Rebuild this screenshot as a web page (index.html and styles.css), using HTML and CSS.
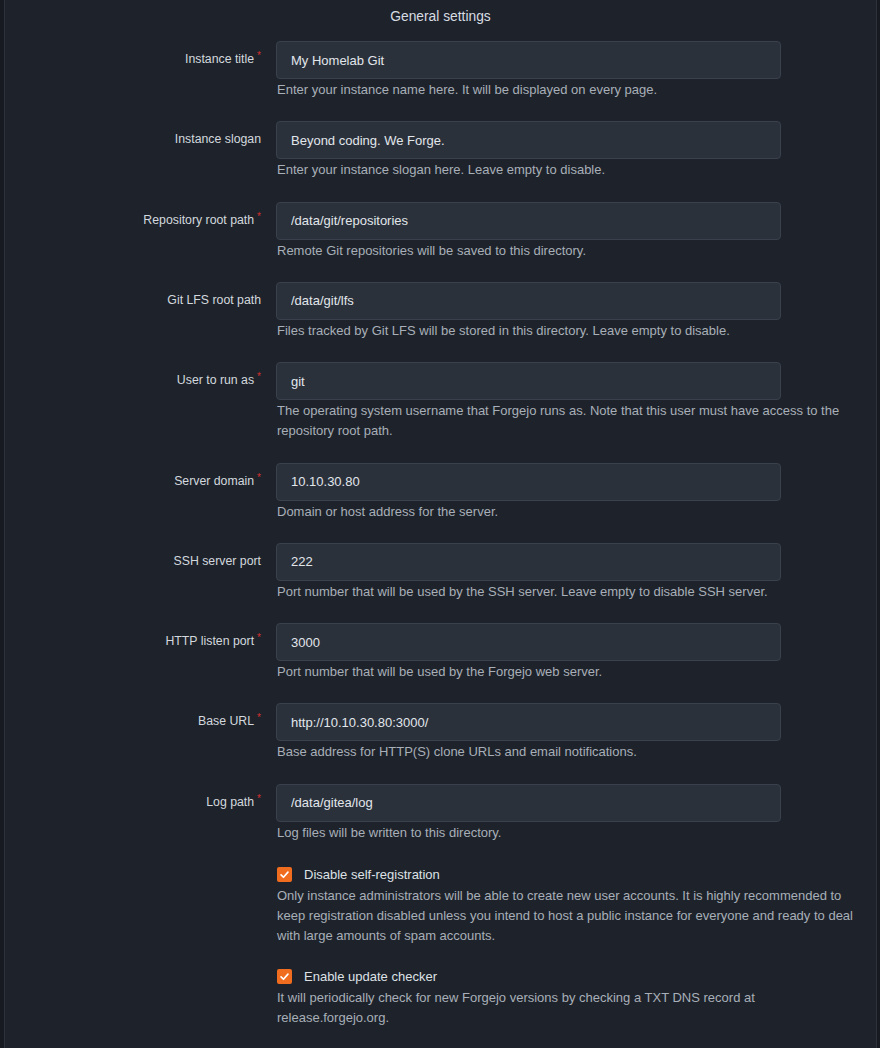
FILE: index.html
```html
<!DOCTYPE html>
<html lang="en">
<head>
<meta charset="utf-8">
<title>Install</title>
<link rel="stylesheet" href="styles.css">
</head>
<body>
<div class="page">
  <h4 class="title">General settings</h4>
  <form class="form">
    <div class="field">
      <div class="row"><label class="lbl required">Instance title</label><input class="inp" type="text" value="My Homelab Git"></div>
      <div class="help">Enter your instance name here. It will be displayed on every page.</div>
    </div>
    <div class="field">
      <div class="row"><label class="lbl">Instance slogan</label><input class="inp" type="text" value="Beyond coding. We Forge."></div>
      <div class="help">Enter your instance slogan here. Leave empty to disable.</div>
    </div>
    <div class="field">
      <div class="row"><label class="lbl required">Repository root path</label><input class="inp" type="text" value="/data/git/repositories"></div>
      <div class="help">Remote Git repositories will be saved to this directory.</div>
    </div>
    <div class="field">
      <div class="row"><label class="lbl">Git LFS root path</label><input class="inp" type="text" value="/data/git/lfs"></div>
      <div class="help">Files tracked by Git LFS will be stored in this directory. Leave empty to disable.</div>
    </div>
    <div class="field">
      <div class="row"><label class="lbl required">User to run as</label><input class="inp" type="text" value="git"></div>
      <div class="help">The operating system username that Forgejo runs as. Note that this user must have access to the repository root path.</div>
    </div>
    <div class="field">
      <div class="row"><label class="lbl required">Server domain</label><input class="inp" type="text" value="10.10.30.80"></div>
      <div class="help">Domain or host address for the server.</div>
    </div>
    <div class="field">
      <div class="row"><label class="lbl">SSH server port</label><input class="inp" type="text" value="222"></div>
      <div class="help">Port number that will be used by the SSH server. Leave empty to disable SSH server.</div>
    </div>
    <div class="field">
      <div class="row"><label class="lbl required">HTTP listen port</label><input class="inp" type="text" value="3000"></div>
      <div class="help">Port number that will be used by the Forgejo web server.</div>
    </div>
    <div class="field">
      <div class="row"><label class="lbl required">Base URL</label><input class="inp" type="text" value="http://10.10.30.80:3000/"></div>
      <div class="help">Base address for HTTP(S) clone URLs and email notifications.</div>
    </div>
    <div class="field">
      <div class="row"><label class="lbl required">Log path</label><input class="inp" type="text" value="/data/gitea/log"></div>
      <div class="help">Log files will be written to this directory.</div>
    </div>
    <div class="field check-field">
      <div class="check-row">
        <span class="box"><svg viewBox="0 0 16 16" width="11" height="11"><path d="M3 8.5 L6.5 12 L13 4.5" fill="none" stroke="#fff" stroke-width="2.4" stroke-linecap="round" stroke-linejoin="round"/></svg></span>
        <span class="check-label">Disable self-registration</span>
      </div>
      <div class="help">Only instance administrators will be able to create new user accounts. It is highly recommended to keep registration disabled unless you intend to host a public instance for everyone and ready to deal with large amounts of spam accounts.</div>
    </div>
    <div class="field check-field">
      <div class="check-row">
        <span class="box"><svg viewBox="0 0 16 16" width="11" height="11"><path d="M3 8.5 L6.5 12 L13 4.5" fill="none" stroke="#fff" stroke-width="2.4" stroke-linecap="round" stroke-linejoin="round"/></svg></span>
        <span class="check-label">Enable update checker</span>
      </div>
      <div class="help">It will periodically check for new Forgejo versions by checking a TXT DNS record at release.forgejo.org.</div>
    </div>
  </form>
</div>
</body>
</html>
```

FILE: styles.css
```css
html, body {
  margin: 0;
  padding: 0;
  background: #171b21;
  height: 100%;
}
body {
  font-family: "Liberation Sans", Arial, sans-serif;
  color: #d2d7de;
  overflow: hidden;
}
.page {
  margin-left: 4px;
  width: 871px;
  min-height: 1100px;
  background: #1e232b;
  border-left: 1px solid #2d333c;
  border-right: 1px solid #2d333c;
  padding-top: 7px;
}
.title {
  margin: 0 0 14px 0;
  font-size: 13.8px;
  line-height: 20px;
  font-weight: normal;
  text-align: center;
  color: #d7dce2;
}
.form {
  display: flex;
  flex-direction: column;
}
.field {
  margin-bottom: 21px;
}
.row {
  display: flex;
  align-items: center;
  gap: 14px;
}
.lbl {
  width: 257px;
  text-align: right;
  font-size: 12.3px;
  color: #d3d8de;
  line-height: 16px;
  position: relative;
  top: -1px;
  left: -1px;
}
.lbl.required::after {
  content: "*";
  color: #d32f2f;
  font-size: 10px;
  vertical-align: top;
  position: relative;
  top: -3px;
  margin-left: 3px;
}
.inp {
  box-sizing: border-box;
  width: 505px;
  height: 38px;
  margin: 0;
  padding: 0 14px;
  background: #2a313b;
  border: 1px solid #3a414c;
  border-radius: 4px;
  color: #e2e6eb;
  font-family: "Liberation Sans", Arial, sans-serif;
  font-size: 13px;
  outline: none;
}
.help {
  margin-top: 1px;
  margin-left: 272px;
  width: 580px;
  font-size: 13px;
  line-height: 20.25px;
  color: #a8afb8;
}
.check-field {
  margin-bottom: 19px;
}
.check-field .help {
  margin-top: 0;
}
.check-row {
  display: flex;
  align-items: center;
  margin-left: 272px;
  height: 22px;
}
.box {
  width: 15px;
  height: 15px;
  border-radius: 2px;
  background: #f06c1f;
  display: flex;
  align-items: center;
  justify-content: center;
  margin-right: 12px;
}
.check-label {
  font-size: 13px;
  color: #dde1e6;
}
```
